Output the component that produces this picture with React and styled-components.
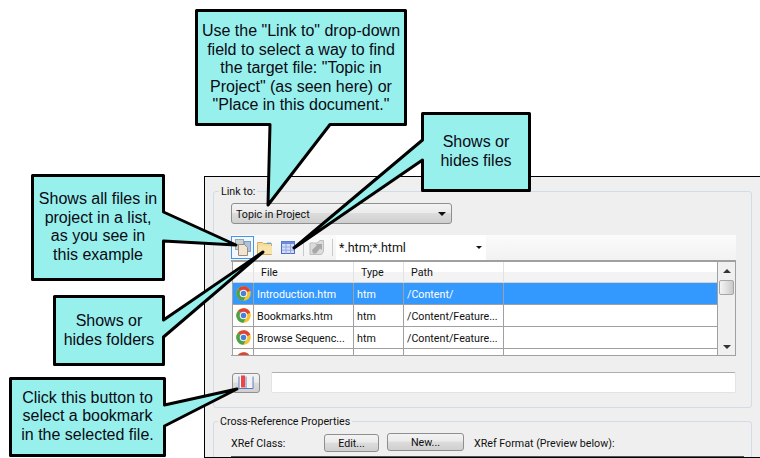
import React from "react";
import styled, { createGlobalStyle } from "styled-components";

const Global = createGlobalStyle`
  html, body { margin: 0; padding: 0; background: #fff; }
`;
const Page = styled.div`
  position: relative; width: 760px; height: 458px; overflow: hidden; background: #fff;
  padding: 176px 0 0 204px; box-sizing: border-box;
  font-family: Roboto, "Liberation Sans", sans-serif; font-size: 10.7px; color: #111;
`;
const Dialog = styled.div`
  height: 282px; box-sizing: border-box; background: #efefef;
  border-top: 1px solid #000; border-left: 1px solid #000; border-bottom: 1px solid #000;
  padding: 14px 8px 0 8px; overflow: hidden;
`;
const Group = styled.section`
  position: relative; box-sizing: border-box; border: 1px solid #d0dce8; border-radius: 3px;
  padding: ${p => p.$pad};
  height: ${p => p.$h}px; margin-top: ${p => p.$mt || 0}px;
`;
const Legend = styled.span`
  position: absolute; left: ${p => p.$left}px; top: -8px; line-height: 16px; padding: 0 2px; background: #efefef;
`;
const Dropdown = styled.div`
  width: 221px; height: 21px; box-sizing: border-box; border: 1px solid #8e8f8f; border-radius: 3px;
  background: linear-gradient(#f3f3f3 0%, #ebebeb 45%, #dcdcdc 50%, #cfcfcf 100%);
  display: flex; align-items: center; justify-content: space-between; padding: 1px 5px 0 4px;
`;
const Caret = styled.i`
  width: 0; height: 0; display: block; border-left: ${p => p.$s}px solid transparent; border-right: ${p => p.$s}px solid transparent;
  border-top: ${p => p.$s}px solid #111;
`;
const Toolbar = styled.div`
  margin-top: 11px; height: 25px; background: linear-gradient(#fbfbfb, #f2f2f2);
  display: flex; align-items: center;
`;
const ToolButton = styled.button`
  width: ${p => p.$w}px; height: 23px; padding: 0; margin: 0; box-sizing: border-box; flex: none;
  display: flex; align-items: center; justify-content: center; background: ${p => p.$active ? "#f4f8fc" : "transparent"};
  border: 1px solid ${p => p.$active ? "#3d97ed" : "transparent"};
`;
const Sep = styled.span`
  width: 1px; height: 17px; background: #c9c9c9; margin: 0 ${p => p.$r}px 0 ${p => p.$l}px; flex: none;
`;
const Combo = styled.div`
  width: 150px; height: 25px; background: #fff; display: flex; align-items: center; justify-content: space-between;
  box-sizing: border-box; padding: 0 4px 0 3px; font-size: 12.5px;
`;
const Table = styled.div`
  height: 96px; display: flex; overflow: hidden; border-top: 2px solid #a0a0a0; box-sizing: border-box;
  border-bottom: 1px solid #a0a0a0;
`;
const List = styled.div`
  flex: 1; margin-left: 1px; border-left: 1px solid #a0a0a0; border-right: 1px solid #a0a0a0; overflow: hidden; background: #fff;
`;
const Cols = styled.div`
  display: grid; grid-template-columns: 21px 100px 50px 100px 1fr;
`;
const Header = styled(Cols)`
  height: 21px; box-sizing: border-box; border-bottom: 1px solid #d2d2d2;
  background: linear-gradient(#fff 0 50%, #f3f3f4 50% 100%);
`;
const HeadCell = styled.div`
  border-right: 1px solid #e2e2e2; line-height: 22px; padding-left: ${p => p.$pl}px;
`;
const Row = styled(Cols)`
  height: 22px; box-sizing: border-box; border-bottom: 1px solid #a0a0a0;
  background: ${p => p.$sel ? "#3399ff" : "#fff"}; color: ${p => p.$sel ? "#fff" : "#111"};
`;
const Cell = styled.div`
  border-right: 1px solid #a0a0a0; line-height: 24px; padding-left: ${p => p.$pl}px; white-space: nowrap; overflow: hidden;
  display: flex; align-items: ${p => p.$icon ? "center" : "stretch"};
`;
const Scrollbar = styled.div`
  width: 18px; box-sizing: border-box; background: #f0f0f0; border-right: 1px solid #a0a0a0;
  display: flex; flex-direction: column; align-items: center; padding: 7px 0 6px;
`;
const Thumb = styled.div`
  width: 15px; height: 15px; box-sizing: border-box; border: 1px solid #a6a6a6; border-radius: 2px; margin-top: 7px;
  background: linear-gradient(90deg, #f4f4f4, #dcdcdc 60%, #c8c8c8);
`;
const Arrow = styled.i`
  width: 0; height: 0; display: block; border-left: 4px solid transparent; border-right: 4px solid transparent;
  ${p => p.$up ? "border-bottom: 4px solid #333;" : "border-top: 4px solid #333; margin-top: auto;"}
`;
const BookmarkRow = styled.div`
  display: flex; margin-top: 16px; align-items: center; gap: 11px; padding-left: 1px;
`;
const PushButton = styled.button`
  width: ${p => p.$w}px; height: ${p => p.$h}px; padding: 1px 0 0; box-sizing: border-box; border: 1px solid #8e8f8f; border-radius: 3px;
  margin-top: ${p => p.$mt || 0}px; flex: none;
  background: linear-gradient(#f3f3f3 0%, #ebebeb 45%, #dcdcdc 50%, #cfcfcf 100%);
  font: inherit; color: inherit; display: flex; align-items: center; justify-content: center;
`;
const Input = styled.div`
  flex: 1; height: 21px; box-sizing: border-box; background: #fff; border: 1px solid #e3e3e6; border-top-color: #aeaeb0; border-radius: 2px;
`;
const PropRow = styled.div`
  display: flex; align-items: flex-start; height: 19px;
`;
const PropLabel = styled.span`
  line-height: 21px; width: ${p => p.$w}px; flex: none;
`;
const Preview = styled.div`
  margin-top: 4px; margin-right: 3px; border-top: 1px solid #555; height: 20px;
`;
const Shapes = styled.svg`
  position: absolute; left: 0; top: 0; width: 760px; height: 458px;
`;
const CalloutText = styled.div`
  position: absolute; left: ${p => p.$x}px; top: ${p => p.$y}px; width: ${p => p.$w}px; height: ${p => p.$h}px;
  display: flex; align-items: center; justify-content: center; text-align: center;
  font-family: "Liberation Sans", Arial, sans-serif; font-size: 16px; line-height: 18.5px; color: #0a0a14; white-space: pre-line;
`;

const Chrome = () => (
  <svg width="15" height="15" viewBox="0 0 30 30">
    <circle cx="15" cy="15" r="14.5" fill="#f4c430" />
    <path d="M15 15 L4.2 5.5 A14.5 14.5 0 0 1 28.5 9.5 Z" fill="#dc4438" />
    <path d="M15 15 L4.2 5.5 A14.5 14.5 0 0 0 15 29.5 L19 21 Z" fill="#4aa24a" />
    <circle cx="15" cy="15" r="7.5" fill="#f4f4f4" />
    <circle cx="15" cy="15" r="5.4" fill="#4a80d8" />
  </svg>
);
const FilesIcon = () => (
  <svg width="18" height="19" viewBox="0 0 18 19">
    <rect x="1.500" y="1.500" width="8" height="10" fill="#c6d2d6" stroke="#9aa8ae" />
    <rect x="10.500" y="3.500" width="6" height="10" fill="#a9c3e0" stroke="#7f9cc0" />
    <path d="M4.500 6.500h6l3 3v8h-9z" fill="#f0e4d2" stroke="#a08c76" />
  </svg>
);
const FolderIcon = () => (
  <svg width="18" height="16" viewBox="0 0 18 16">
    <path d="M1.500 4.500V2.500h5l1 1h8v11h-14z" fill="#f6dc9c" stroke="#d2aa62" />
    <path d="M2 6h14v8H2z" fill="#f8e3aa" />
    <path d="M11 2.600h4v1.400h-4z" fill="#58a8e0" />
  </svg>
);
const GridIcon = () => (
  <svg width="16" height="15" viewBox="0 0 16 15">
    <rect x="1.500" y="1.500" width="13" height="12" fill="#d4def6" stroke="#4c6cc8" />
    <path d="M1.500 1.500h13v2.500h-13z" fill="#6e8ad8" />
    <path d="M6 4v9.500M10.500 4v9.500M2 7h12M2 10.200h12" stroke="#93a9e4" fill="none" />
  </svg>
);
const ExportIcon = () => (
  <svg width="18" height="17" viewBox="0 0 18 17">
    <path d="M2 4h7l3-2.500h3.500v11l-2 3H2z" fill="#dcdcdc" stroke="#bdbdbd" />
    <path d="M4 11l5-5-2-1h7v6l-2-1.500-4 5H5z" fill="#a8a8a8" />
  </svg>
);
const BookIcon = () => (
  <svg width="18" height="16" viewBox="0 0 18 16">
    <path d="M2 1.500v12h14v-12" fill="#fff" stroke="#5a78b8" />
    <path d="M9 1.500v12" stroke="#5a78b8" />
    <rect x="4" y="0.500" width="4" height="12" fill="#ee4444" />
    <rect x="10" y="1.500" width="5" height="11" fill="#f2f2f2" />
  </svg>
);

const rows = [
  ["Introduction.htm", "htm", "/Content/", true],
  ["Bookmarks.htm", "htm", "/Content/Feature..."],
  ["Browse Sequenc...", "htm", "/Content/Feature..."],
  ["", "", ""],
];
const outlines = [
  "M196.500 10.500H405.500V124.500H330L268 205L270 124.500H196.500Z",
  "M422.500 113.500H529.500V190.500H422.500V160L294 248L422.500 140Z",
  "M32.500 175.500H163.500V212L236 245L163.500 241V279.500H32.500Z",
  "M54.500 296.500H163.500V320L263 252L163.500 337V364.500H54.500Z",
  "M10.500 378.500H164.500V405L237 389L164.500 426V455.500H10.500Z",
];
const notes = [
  { x: 197, y: 11, w: 208, h: 115, t: 'Use the "Link to" drop-down\nfield to select a way to find\nthe target file: "Topic in\nProject" (as seen here) or\n"Place in this document."' },
  { x: 423, y: 113, w: 106, h: 77, t: "Shows or\nhides files" },
  { x: 33, y: 175, w: 130, h: 104, t: "Shows all files in\nproject in a list,\nas you see in\nthis example" },
  { x: 55, y: 296, w: 108, h: 69, t: "Shows or\nhides folders" },
  { x: 11, y: 378, w: 153, h: 77, t: "Click this button to\nselect a bookmark\nin the selected file." },
];

export default function App() {
  return (
    <Page>
      <Global />
      <Dialog>
        <Group $h={217} $pad="11px 15px 0 17px">
          <Legend $left={5}>Link to:</Legend>
          <Dropdown>Topic in Project<Caret $s={4} /></Dropdown>
          <Toolbar>
            <ToolButton $w={23} $active><FilesIcon /></ToolButton>
            <ToolButton $w={22}><FolderIcon /></ToolButton>
            <ToolButton $w={24}><GridIcon /></ToolButton>
            <Sep $l={3} $r={2} />
            <ToolButton $w={22}><ExportIcon /></ToolButton>
            <Sep $l={4} $r={3} />
            <Combo>*.htm;*.html<Caret $s={3} /></Combo>
          </Toolbar>
          <Table>
            <List>
              <Header>
                <HeadCell />
                <HeadCell $pl={7}>File</HeadCell>
                <HeadCell $pl={7}>Type</HeadCell>
                <HeadCell $pl={7}>Path</HeadCell>
                <span />
              </Header>
              {rows.map((r, i) => (
                <Row key={i} $sel={r[3]}>
                  <Cell $icon $pl={3}><Chrome /></Cell>
                  <Cell $pl={3}>{r[0]}</Cell>
                  <Cell $pl={3}>{r[1]}</Cell>
                  <Cell $pl={3}>{r[2]}</Cell>
                  <span />
                </Row>
              ))}
            </List>
            <Scrollbar>
              <Arrow $up />
              <Thumb />
              <Arrow />
            </Scrollbar>
          </Table>
          <BookmarkRow>
            <PushButton $w={28} $h={20}><BookIcon /></PushButton>
            <Input />
          </BookmarkRow>
        </Group>
        <Group $h={60} $mt={13} $pad="11px 4px 0 17px">
          <Legend $left={4}>Cross-Reference Properties</Legend>
          <PropRow>
            <PropLabel $w={93}>XRef Class:</PropLabel>
            <PushButton $w={55} $h={18} $mt={1}>Edit...</PushButton>
            <PropLabel $w={8} />
            <PushButton $w={77} $h={18}>New...</PushButton>
            <PropLabel $w={10} />
            <PropLabel $w={200}>XRef Format (Preview below):</PropLabel>
          </PropRow>
          <Preview />
        </Group>
      </Dialog>
      <Shapes viewBox="0 0 760 458">
        {outlines.map((d, i) => (
          <path key={i} d={d} fill="#98f0ec" stroke="#000" strokeWidth="3" strokeLinejoin="round" />
        ))}
      </Shapes>
      {notes.map((n, i) => (
        <CalloutText key={i} $x={n.x} $y={n.y} $w={n.w} $h={n.h}>{n.t}</CalloutText>
      ))}
    </Page>
  );
}
